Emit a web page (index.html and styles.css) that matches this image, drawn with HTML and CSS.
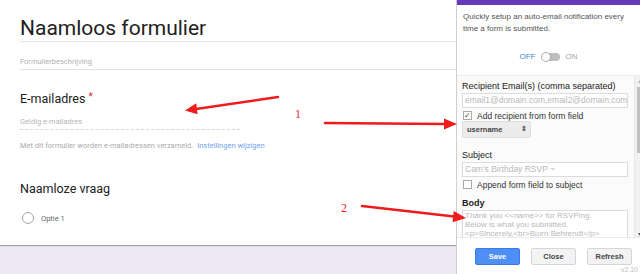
FILE: index.html
```html
<!DOCTYPE html>
<html lang="nl">
<head>
    <meta charset="UTF-8">
    <title>Naamloos formulier</title>
    <link rel="stylesheet" href="styles.css">
</head>
<body>
<div class="page">

    <main class="form">
        <section class="card">
            <h1 class="title">Naamloos formulier</h1>
            <div class="desc">Formulierbeschrijving</div>

            <div class="question">E-mailadres <span class="req">*</span></div>
            <div class="email-input">Geldig e-mailadres</div>
            <p class="note">Met dit formulier worden e-mailadressen verzameld. <a href="#">Instellingen wijzigen</a></p>

            <div class="question q2">Naamloze vraag</div>
            <label class="option"><span class="radio"></span>Optie 1</label>
        </section>
    </main>

    <aside class="panel">
        <div class="panel-bar"></div>
        <p class="intro">Quickly setup an auto-email notification every time a form is submitted.</p>

        <div class="toggle-row">
            <span class="off">OFF</span>
            <span class="switch"><span class="knob"></span></span>
            <span class="on">ON</span>
        </div>

        <div class="settings">
            <div class="settings-body">
                <div class="label">Recipient Email(s) (comma separated)</div>
                <div class="field placeholder">email1@domain.com,email2@domain.com</div>
                <div class="check-row"><span class="checkbox checked">&#10003;</span>Add recipient from form field</div>
                <div class="select">username <span class="updown">&#8661;</span></div>

                <div class="label subject">Subject</div>
                <div class="field placeholder">Cam's Birthday RSVP ~</div>
                <div class="check-row"><span class="checkbox"></span>Append form field to subject</div>

                <div class="label body-label">Body</div>
                <div class="field textarea placeholder">Thank you &lt;&lt;name&gt;&gt; for RSVPing.<br>Below is what you submitted.<br>&lt;p&gt;Sincerely,&lt;br&gt;Bjorn Behrendt&lt;/p&gt;</div>
            </div>
            <div class="scrollbar">
                <span class="arrow-up"></span>
                <span class="thumb"></span>
                <span class="arrow-down"></span>
            </div>
        </div>

        <div class="footer">
            <div class="buttons">
                <button class="btn save">Save</button>
                <button class="btn">Close</button>
                <button class="btn">Refresh</button>
            </div>
            <div class="version">v2.10</div>
        </div>
    </aside>

    <!-- rode pijlen van de annotatie -->
    <svg class="annotations" width="640" height="274" viewBox="0 0 640 274">
        <g stroke="#ee1c1c" stroke-width="2.5" stroke-linecap="round">
            <line x1="278" y1="97" x2="196" y2="109"/>
            <line x1="325" y1="123" x2="445" y2="124"/>
            <line x1="362" y1="206" x2="454" y2="216.5"/>
        </g>
        <g fill="#ee1c1c">
            <polygon points="185,110.5 197.6,114.2 196.2,103.3"/>
            <polygon points="457,124 444,118.5 444,129.5"/>
            <polygon points="466,218 452.5,222.2 453.7,211"/>
        </g>
        <text x="295" y="118" class="note-num">1</text>
        <text x="341" y="212" class="note-num">2</text>
    </svg>
</div>
</body>
</html>
```

FILE: styles.css
```css
body {
    margin: 0;
    width: 640px;
    height: 274px;
    overflow: hidden;
    background: #ede7f6;
}

.page {
    position: relative;
    display: flex;
    width: 640px;
    height: 274px;
}

/* formulier links */

.form {
    flex: 1;
    font-family: Roboto, "Liberation Sans", sans-serif;
}

.card {
    height: 229px;
    padding: 16px 0 0 20px;
    background: #fff;
    box-shadow: 0 1px 1px rgba(0,0,0,0.3);
}

.title {
    margin: 0;
    padding-bottom: 1px;
    font-size: 21px;
    font-weight: 400;
    line-height: 24px;
    color: #212121;
    border-bottom: 1px solid #e3e3e3;
}

.desc {
    margin-top: 15px;
    padding-bottom: 2px;
    font-size: 7.5px;
    line-height: 10px;
    color: #b0b0b0;
    border-bottom: 1px solid #e3e3e3;
}

.question {
    margin-top: 19px;
    font-size: 12.5px;
    line-height: 16px;
    color: #212121;
}

.req {
    color: #d93025;
    font-size: 10px;
    vertical-align: 3px;
}

.email-input {
    width: 220px;
    margin-top: 10px;
    padding-bottom: 2px;
    font-size: 7.5px;
    line-height: 10px;
    color: #b5b5b5;
    border-bottom: 1px dashed #d6d6d6;
}

.note {
    margin: 11px 0 0;
    font-size: 7.5px;
    line-height: 10px;
    color: #ababab;
}

.note a {
    margin-left: 2px;
    color: #6f9ff0;
    text-decoration: none;
}

.q2 {
    margin-top: 30px;
}

.option {
    display: flex;
    align-items: center;
    gap: 7px;
    height: 14px;
    margin-top: 14px;
    font-size: 7.5px;
    color: #666;
}

.radio {
    width: 10px;
    height: 10px;
    margin-left: 2px;
    border: 1.5px solid #a5a5a5;
    border-radius: 50%;
}

/* zijpaneel rechts */

.panel {
    display: flex;
    flex-direction: column;
    width: 183px;
    height: 274px;
    background: #fff;
    border-left: 1px solid #cfcfcf;
    font-family: "Liberation Sans", Arial, sans-serif;
    color: #333;
}

.panel-bar {
    height: 5px;
    background: #673ab7;
}

.intro {
    margin: 6px 0 0;
    padding: 0 6px;
    font-size: 8px;
    line-height: 12px;
    color: #555;
}

.toggle-row {
    display: flex;
    justify-content: center;
    align-items: center;
    gap: 6px;
    height: 10px;
    margin-top: 17px;
    font-size: 8px;
}

.off {
    color: #3c8ad6;
}

.on {
    color: #a0a0a0;
}

.switch {
    position: relative;
    width: 18px;
    height: 8px;
    background: #bdbdbd;
    border-radius: 4px;
}

.knob {
    position: absolute;
    left: -1px;
    top: -1px;
    width: 8px;
    height: 8px;
    background: #fafafa;
    border: 1px solid #b0b0b0;
    border-radius: 50%;
}

.settings {
    display: flex;
    height: 165px;
    margin-top: 13px;
    border-top: 1px solid #ececec;
    background: #fbfbfb;
    overflow: hidden;
}

.settings-body {
    flex: 1;
    padding: 5px 6px 0 5px;
}

.label {
    height: 11px;
    font-size: 9px;
    line-height: 11px;
    color: #222;
}

.field {
    height: 13px;
    margin-top: 1px;
    padding-left: 2px;
    background: #fff;
    border: 1px solid #dcdcdc;
    font-size: 8.5px;
    line-height: 13px;
    white-space: nowrap;
    overflow: hidden;
}

.placeholder {
    color: #b8b8b8;
}

.check-row {
    display: flex;
    align-items: center;
    gap: 5px;
    height: 10px;
    margin-top: 3px;
    padding-left: 1px;
    font-size: 8.5px;
    color: #333;
}

.checkbox {
    width: 7px;
    height: 7px;
    border: 1px solid #aaa;
    background: #fff;
    font-size: 8px;
    line-height: 7px;
    text-align: center;
    color: #444;
}

.select {
    display: flex;
    justify-content: space-between;
    align-items: center;
    width: 60px;
    height: 15px;
    margin-top: 0;
    padding: 0 3px 0 4px;
    background: #ececec;
    border: 1px solid #dedede;
    border-radius: 2px;
    font-size: 7.5px;
    font-weight: bold;
    color: #444;
}

.updown {
    font-size: 7px;
    color: #555;
}

.subject {
    margin-top: 12px;
}

.body-label {
    margin-top: 8px;
    font-weight: bold;
}

.textarea {
    height: 40px;
    padding-top: 0;
    font-size: 8px;
    line-height: 9px;
}

.scrollbar {
    position: relative;
    width: 11px;
    background: #f1f1f1;
    border-left: 1px solid #e8e8e8;
}

.thumb {
    position: absolute;
    left: 2px;
    top: 11px;
    width: 7px;
    height: 66px;
    background: #c1c1c1;
}

.arrow-up,
.arrow-down {
    position: absolute;
    left: 3px;
    width: 0;
    height: 0;
    border-left: 2.5px solid transparent;
    border-right: 2.5px solid transparent;
}

.arrow-up {
    top: 4px;
    border-bottom: 3px solid #b0b0b0;
}

.arrow-down {
    top: 157px;
    border-top: 3px solid #505050;
}

.footer {
    flex: 1;
    background: #fff;
    border-top: 1px solid #eaeaea;
}

.buttons {
    display: flex;
    gap: 11px;
    margin-top: 10px;
    padding-left: 18px;
}

.btn {
    width: 45px;
    height: 17px;
    padding: 0;
    font-family: "Liberation Sans", Arial, sans-serif;
    font-size: 7.5px;
    font-weight: bold;
    color: #444;
    background: #f3f3f3;
    border: 1px solid #d6d6d6;
    border-radius: 2px;
}

.btn.save {
    color: #fff;
    background: #4d8ff5;
    border-color: #3b7be8;
}

.version {
    margin-top: 1px;
    padding-right: 2px;
    text-align: right;
    font-size: 7px;
    line-height: 8px;
    color: #c0c0c0;
}

/* annotatie */

.annotations {
    position: absolute;
    left: 0;
    top: 0;
    pointer-events: none;
}

.note-num {
    font-family: "Liberation Serif", serif;
    font-size: 12px;
    fill: #ee1c1c;
}
```
